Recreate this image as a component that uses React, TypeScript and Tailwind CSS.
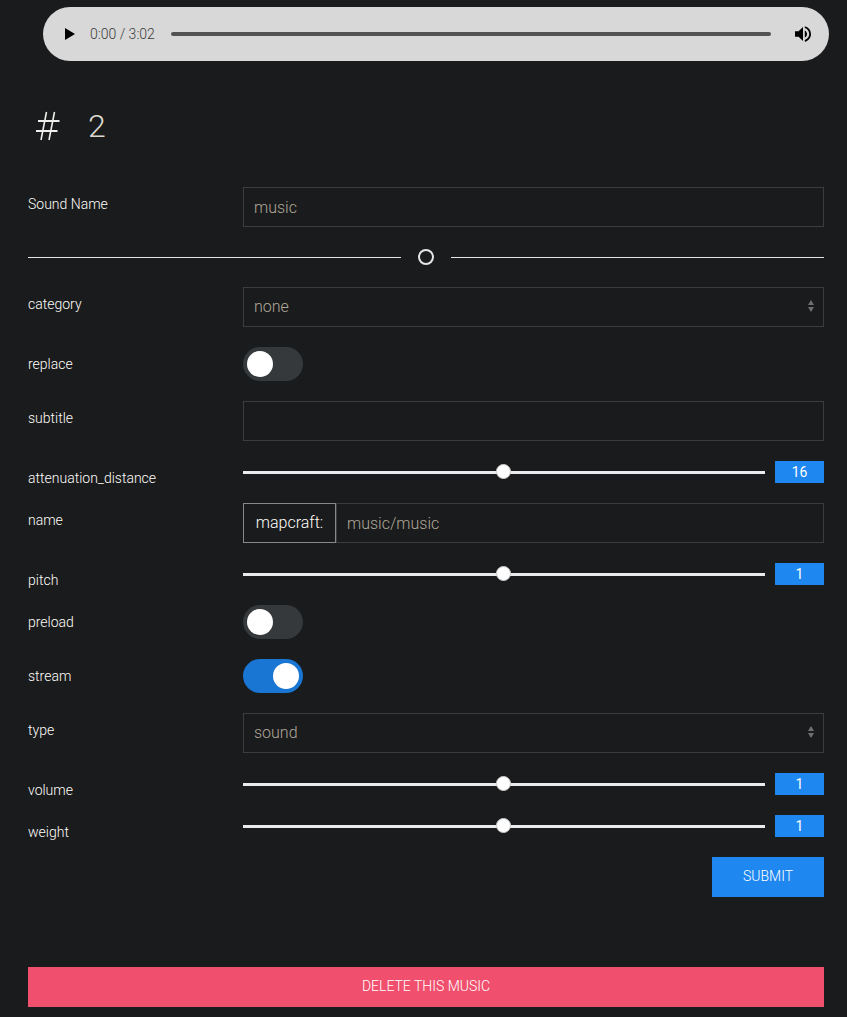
import type { ReactNode } from 'react';

function Row({ label, children }: { label: string; children: ReactNode }) {
  return (
    <div className="mb-5 flex items-start">
      <label className="-mb-5 w-[215px] shrink-0 pt-[7px] text-[14px] leading-5 font-light text-[#fffdf9]">{label}</label>
      <div className="min-w-0 flex-1">{children}</div>
    </div>
  );
}

function TextBox({ value }: { value: string }) {
  return (
    <div className="flex h-10 items-center border border-[#3a3e41] px-[10px] pt-[2px] text-[16px] leading-9 font-light text-[#b0a898]">{value}</div>
  );
}

function Select({ value }: { value: string }) {
  return (
    <div className="flex h-10 items-center justify-between border border-[#3a3e41] pr-[9px] pl-[10px] text-[16px] font-light text-[#b0a898]">
      <span className="-mt-px">{value}</span>
      <svg className="-mt-[2px] h-3 w-[6px]" viewBox="0 0 6 12" fill="#707070">
        <path d="M0 5 3 0 6 5ZM0 7h6l-3 5Z" />
      </svg>
    </div>
  );
}

function Toggle({ on }: { on: boolean }) {
  return (
    <div className={on ? 'flex h-[34px] w-[60px] justify-end rounded-full bg-[#1976d2] p-1' : 'flex h-[34px] w-[60px] rounded-full bg-[#35393b] p-1'}>
      <span className="size-[26px] rounded-full bg-white" />
    </div>
  );
}

function Slider({ value }: { value: string }) {
  return (
    <div className="flex h-[22px] items-center gap-[10px]">
      <div className="flex h-[3px] w-[522px] items-center justify-center bg-[#ebebeb] pr-px">
        <span className="-mt-[2px] size-[15px] shrink-0 rounded-full border border-[#ccc] bg-white" />
      </div>
      <span className="h-[22px] flex-1 bg-[#1e87f0] text-center text-[14px] leading-[22px] text-white">{value}</span>
    </div>
  );
}

export default function App() {
  return (
    <main className="h-[1017px] w-[847px] overflow-hidden bg-[#1a1b1d] pt-[7px] font-['Roboto',sans-serif]">
      <div className="ml-[43px] flex h-[54px] w-[786px] items-center rounded-full bg-[#d8d8d8]">
        <svg className="ml-[22px] h-3 w-[10px]" viewBox="0 0 10 12"><path d="M0 0v12l10-6Z" /></svg>
        <span className="ml-[15px] w-[81px] text-[14px] font-light text-[#3a3a3a]">0:00 / 3:02</span>
        <div className="h-1 w-[600px] rounded-full bg-[#525252]" />
        <svg className="ml-[24px] size-4" viewBox="3 3 18 18">
          <path d="M3 9v6h4l5 5V4L7 9H3zm13.500 3c0-1.770-1.020-3.290-2.500-4.030v8.050c1.480-.73 2.500-2.250 2.500-4.020zM14 3.230v2.060c2.890.86 5 3.540 5 6.710s-2.110 5.850-5 6.710v2.060c4.010-.91 7-4.490 7-8.770s-2.990-7.860-7-8.770z" />
        </svg>
      </div>

      <div className="mt-[41px] ml-[28px] flex h-12 items-center">
        <svg className="ml-2 h-[30px] w-6" viewBox="0 0 24 30" fill="none" stroke="#f0eeea" strokeWidth="1.6">
          <path d="M10.500 1 5 29M18.500 1 13 29" />
          <path d="M2 10h21.500M0 20h21.500" strokeWidth="2" />
        </svg>
        <span className="ml-[28px] text-[32px] leading-none font-light text-[#ddd9d0]">2</span>
      </div>

      <form className="mt-[37px] mr-[23px] ml-[28px]">
        <Row label="Sound Name"><TextBox value="music" /></Row>
        <div className="mb-5 flex h-5 items-center">
          <span className="h-px w-[373px] bg-[#e5e5e5]" />
          <span className="mr-[17px] ml-[17px] size-4 rounded-full border-2 border-[#e5e5e5]" />
          <span className="h-px flex-1 bg-[#e5e5e5]" />
        </div>
        <Row label="category"><Select value="none" /></Row>
        <Row label="replace"><Toggle on={false} /></Row>
        <Row label="subtitle"><TextBox value="" /></Row>
        <Row label="attenuation_distance"><Slider value="16" /></Row>
        <Row label="name">
          <div className="flex">
            <span className="h-10 w-[93px] border border-[#888] text-center text-[16px] leading-[37px] font-light text-[#fffdf9]">mapcraft:</span>
            <div className="flex-1"><TextBox value="music/music" /></div>
          </div>
        </Row>
        <Row label="pitch"><Slider value="1" /></Row>
        <Row label="preload"><Toggle on={false} /></Row>
        <Row label="stream"><Toggle on /></Row>
        <Row label="type"><Select value="sound" /></Row>
        <Row label="volume"><Slider value="1" /></Row>
        <Row label="weight"><Slider value="1" /></Row>
        <div className="flex justify-end">
          <button type="button" className="h-10 w-[112px] bg-[#1e87f0] pb-[2px] text-[14px] leading-[38px] font-light text-white">SUBMIT</button>
        </div>
        <button type="button" className="mt-[70px] block h-10 w-full bg-[#f0506e] pb-[2px] text-[14px] leading-[38px] font-light text-white">DELETE THIS MUSIC</button>
      </form>
    </main>
  );
}
